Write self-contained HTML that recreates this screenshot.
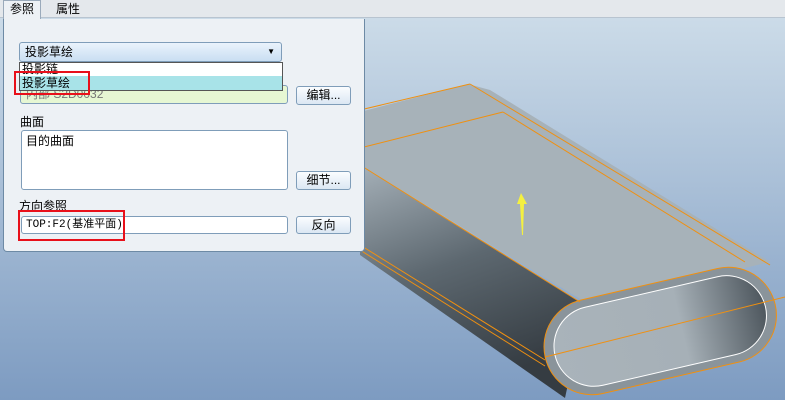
<!DOCTYPE html>
<html><head><meta charset="utf-8"><style>
*{margin:0;padding:0;box-sizing:border-box}
body{width:785px;height:400px;overflow:hidden;position:relative;font-family:"Liberation Sans","Noto Sans CJK SC",sans-serif;font-size:12px;color:#000;background:#a8bdd6}
.a{position:absolute}
.btn{position:absolute;border:1px solid #7f9db9;border-radius:3px;background:linear-gradient(#fbfdff,#dbe7f3);text-align:center;line-height:16px;font-size:12px}
.fld{position:absolute;border:1px solid #7f9db9;border-radius:3px}
</style></head><body>
<svg class="a" style="left:0;top:0" width="785" height="400">
<defs>
<linearGradient id="bg" x1="0" y1="0" x2="0" y2="1"><stop offset="0" stop-color="#cfdeea"/><stop offset="1" stop-color="#7d9bc1"/></linearGradient>
<linearGradient id="side" x1="0" y1="0" x2="0.35" y2="1"><stop offset="0" stop-color="#a6b1b9"/><stop offset="0.5" stop-color="#5d6870"/><stop offset="1" stop-color="#353c42"/></linearGradient>
<linearGradient id="end" x1="0" y1="0" x2="1" y2="0"><stop offset="0" stop-color="#a9b3ba"/><stop offset="0.6" stop-color="#a6b0b7"/><stop offset="1" stop-color="#4e575e"/></linearGradient>
</defs>
<rect width="785" height="400" fill="url(#bg)"/>
<polygon points="360,165 585,305 565,398 360,255" fill="url(#side)"/>
<polygon points="360,112 468,84 490,90 770,262 590,305 360,165" fill="#a7b2b9"/>
<g transform="rotate(-13 660 330)">
<rect x="542" y="283" width="236" height="96" rx="48" fill="#8a949b" stroke="#f09010" stroke-width="1"/>
<rect x="552" y="291" width="216" height="80" rx="40" fill="url(#end)" stroke="#fff" stroke-width="1"/>
</g>
<g stroke="#f09010" stroke-width="1" fill="none">
<line x1="360" y1="110" x2="470" y2="84"/>
<line x1="360" y1="148" x2="503" y2="112"/>
<line x1="360" y1="165" x2="580" y2="302"/>
<line x1="470" y1="84" x2="770" y2="265"/>
<line x1="503" y1="112" x2="745" y2="262"/>
<line x1="360" y1="245" x2="545" y2="360"/>
<line x1="360" y1="250" x2="545" y2="366"/>
<line x1="545" y1="357" x2="785" y2="297"/>
</g>
<polygon points="521,193 517,204 520,204 522,235 523,235 524,204 527,204" fill="#f4f040"/>
</svg>
<div class="a" style="left:0;top:0;width:785px;height:18px;background:#e4e8ec;border-bottom:1px solid #b8c4d0"></div>
<div class="a" style="left:3px;top:0;width:38px;height:19px;background:#edf1f5;border:1px solid #9aaabb;border-bottom:none;line-height:17px;text-align:center">参照</div>
<div class="a" style="left:56px;top:1px;line-height:17px">属性</div>
<div class="a" style="left:3px;top:19px;width:362px;height:233px;background:#edf1f5;border:1px solid #6d8aa5;border-top:none;border-radius:0 0 4px 4px"></div>
<div class="fld" style="left:19px;top:42px;width:263px;height:20px;background:linear-gradient(#eaf3fc,#c9def2);padding-left:5px;line-height:18px">投影草绘<span class="a" style="right:6px;top:0;font-size:8px">▼</span></div>
<div class="fld" style="left:20px;top:85px;width:268px;height:19px;background:#e6f7d3;padding-left:5px;line-height:17px;color:#777">内部 S2D0032</div>
<div class="a" style="left:19px;top:62px;width:264px;height:29px;background:#fff;border:1px solid #555"></div>
<div class="a" style="left:22px;top:62px;line-height:14px">投影链</div>
<div class="a" style="left:20px;top:76px;width:262px;height:14px;background:#a8e3e8;padding-left:2px;line-height:14px">投影草绘</div>
<div class="a" style="left:14px;top:71px;width:76px;height:24px;border:2px solid #e8101a"></div>
<div class="btn" style="left:296px;top:86px;width:55px;height:19px">编辑...</div>
<div class="a" style="left:20px;top:113px">曲面</div>
<div class="fld" style="left:21px;top:130px;width:267px;height:60px;background:#fff;padding:1px 4px">目的曲面</div>
<div class="btn" style="left:296px;top:171px;width:55px;height:19px">细节...</div>
<div class="a" style="left:19px;top:197px">方向参照</div>
<div class="fld" style="left:21px;top:216px;width:267px;height:18px;background:#fff;padding-left:4px;line-height:16px;font-family:'Liberation Mono','Noto Sans CJK SC',monospace;font-size:11px">TOP:F2(基准平面)</div>
<div class="a" style="left:18px;top:210px;width:107px;height:31px;border:2px solid #e8101a"></div>
<div class="btn" style="left:296px;top:216px;width:55px;height:18px">反向</div>
</body></html>
